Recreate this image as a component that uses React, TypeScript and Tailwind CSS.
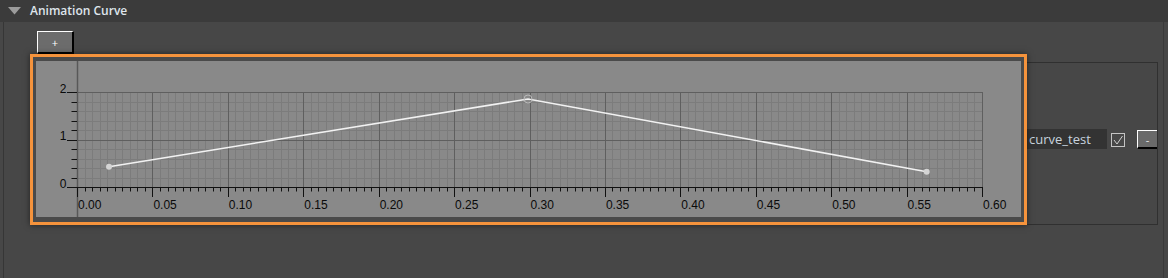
import React from 'react';

// chart geometry, in px inside the gray panel (985 x 156)
const GX0 = 41;
const GX1 = 946;
const GY0 = 31;
const GY1 = 126;
const X = (t: number) => GX0 + (t / 0.6) * (GX1 - GX0);
const Y = (v: number) => GY1 - v * 47.5;

const points = [
  { x: 73, y: 105.7 },
  { x: 492, y: 38 },
  { x: 890.7, y: 110.7 },
];

function CurveChart() {
  const cols = Array.from({ length: 121 }, (_, i) => i);
  const rows = Array.from({ length: 11 }, (_, j) => j);
  const labels = Array.from({ length: 13 }, (_, i) => (i * 0.05).toFixed(2));

  return (
    <svg width={985} height={156} viewBox="0 0 985 156" className="block" style={{ fontFamily: '"Liberation Sans", Arial, sans-serif' }}>
      {/* minor grid */}
      {cols.filter((i) => i % 10 !== 0).map((i) => {
        const x = Math.round(GX0 + (i * (GX1 - GX0)) / 120) + 0.5;
        return <line key={'c' + i} x1={x} x2={x} y1={GY0} y2={GY1} stroke="#7c7c7c" strokeWidth={1} />;
      })}
      {rows.filter((j) => j % 5 !== 0).map((j) => {
        const y = Math.round(GY1 - j * 9.5) + 0.5;
        return <line key={'r' + j} x1={GX0} x2={GX1} y1={y} y2={y} stroke="#7c7c7c" strokeWidth={1} />;
      })}
      {/* major grid */}
      {cols.filter((i) => i % 10 === 0 && i > 0).map((i) => {
        const x = Math.round(GX0 + (i * (GX1 - GX0)) / 120) + 0.5;
        return <line key={'C' + i} x1={x} x2={x} y1={GY0} y2={GY1} stroke="#5f5f5f" strokeWidth={1} />;
      })}
      {[5, 10].map((j) => {
        const y = Math.round(GY1 - j * 9.5) + 0.5;
        return <line key={'R' + j} x1={GX0} x2={GX1} y1={y} y2={y} stroke="#5f5f5f" strokeWidth={1} />;
      })}

      {/* y axis column line */}
      <line x1={GX0 + 0.5} x2={GX0 + 0.5} y1={0} y2={156} stroke="#585858" strokeWidth={1.5} />

      {/* x axis */}
      <line x1={GX0} x2={GX1 + 1} y1={GY1 + 0.5} y2={GY1 + 0.5} stroke="#111" strokeWidth={1} />
      {cols.map((i) => {
        const x = Math.round(GX0 + (i * (GX1 - GX0)) / 120) + 0.5;
        return <line key={'t' + i} x1={x} x2={x} y1={GY1} y2={i % 10 === 0 ? GY1 + 10 : GY1 + 4.5} stroke="#111" strokeWidth={1} />;
      })}
      {labels.map((l, i) => (
        <text key={'l' + l} x={X(i * 0.05) + 1} y={148} fontSize={12} fill="#0a0a0a">{l}</text>
      ))}

      {/* y axis ticks */}
      {rows.map((j) => {
        const y = Math.round(GY1 - j * 9.5) + 0.5;
        return <line key={'yt' + j} x1={j % 5 === 0 ? 31 : 35.5} x2={GX0} y1={y} y2={y} stroke="#111" strokeWidth={1} />;
      })}
      {[0, 1, 2].map((v) => (
        <text key={'yl' + v} x={30.5} y={Y(v) + 0.5} fontSize={12} fill="#0a0a0a" textAnchor="end">{v}</text>
      ))}

      {/* curve */}
      <polyline points={points.map((p) => `${p.x},${p.y}`).join(' ')} fill="none" stroke="#f2f2f2" strokeWidth={1.6} />
      <circle cx={points[0].x} cy={points[0].y} r={3} fill="#d4d4d4" />
      <circle cx={points[2].x} cy={points[2].y} r={3} fill="#d4d4d4" />
      <circle cx={points[1].x} cy={points[1].y} r={4} fill="none" stroke="#b8b8b8" strokeWidth={1} />
    </svg>
  );
}

export default function App() {
  return (
    <div className="w-[1168px] h-[278px] bg-[#474747] flex flex-col overflow-hidden" style={{ fontFamily: '"Open Sans", "Noto Sans", sans-serif' }}>
      {/* section header */}
      <div className="h-[22px] shrink-0 bg-[#3b3b3b] flex items-center">
        <svg width={14} height={8} viewBox="0 0 14 8" className="ml-[8px]">
          <path d="M0 0 H13 L6.5 7.5 Z" fill="#9c9c9c" />
        </svg>
        <span className="ml-[8px] text-[12px] font-semibold text-[#dfe5ec] leading-none">Animation Curve</span>
      </div>

      {/* body */}
      <div className="flex-1 flex">
        <div className="w-[4px] shrink-0 bg-[#474747] border-r border-[#363636]" />
        <div className="flex-1 pl-[26px] border-r border-[#3a3a3a] mr-[4px]">
          <div className="pt-[9px] pl-[7px]">
            <button className="w-[37px] h-[23px] bg-[#6c6c6c] border-t border-l border-white border-r-2 border-b-2 border-r-black border-b-black text-white text-[11px] leading-none flex items-center justify-center">
              +
            </button>
          </div>

          <div className="mt-[8px] w-[1128px] h-[163px] border border-[#303030] flex items-start">
            {/* curve widget, selected */}
            <div className="-mt-[9px] -ml-px w-[997px] h-[171px] shrink-0 border-[3px] border-[#f5933c] bg-[#4a4a4a] pt-[4px] pl-[3px] pr-[3px] pb-[5px] shadow-[0_0_6px_rgba(0,0,0,0.55)] relative z-10">
              <div className="w-[985px] h-[156px] bg-[#898989]">
                <CurveChart />
              </div>
            </div>

            {/* curve row controls */}
            <div className="mt-[66px] flex items-start">
              <div className="w-[80px] h-[20px] bg-[#333333] pl-[2px] flex items-center text-[13px] text-[#c8d3df] leading-none">
                curve_test
              </div>
              <svg width={14} height={14} viewBox="0 0 14 14" className="ml-[4px] mt-[4px]">
                <rect x={0.5} y={0.5} width={13} height={13} fill="none" stroke="#c4c4c4" strokeWidth={1} />
                <path d="M3 7 L6 11 L11.5 3" fill="none" stroke="#d0d0d0" strokeWidth={1} />
              </svg>
              <button className="ml-[12px] mt-px w-[20px] h-[19px] bg-[#6a6a6a] border-t border-l border-white border-b-2 border-b-black text-[#e8e8e8] text-[11px] leading-none flex items-center justify-center">
                -
              </button>
            </div>
          </div>
        </div>
      </div>
    </div>
  );
}
